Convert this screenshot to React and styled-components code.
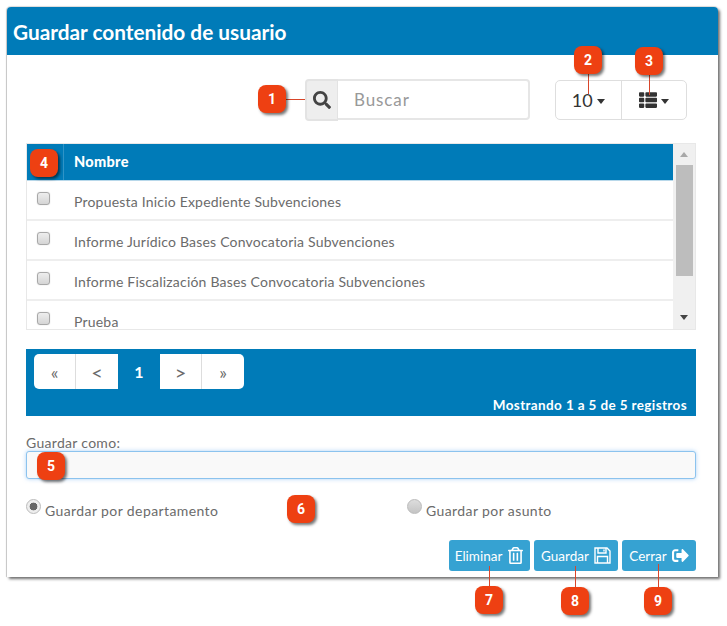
import React from "react";
import styled, { createGlobalStyle } from "styled-components";
import { FaSearch, FaThList, FaRegTrashAlt, FaSignOutAlt } from "react-icons/fa";

const BLUE = "#007bb8";
const TEXT = "#6b6b6b";

const GlobalStyle = createGlobalStyle`
  html, body {
    margin: 0;
    background: #fff;
  }
  body {
    font-family: "Lato", "Noto Sans", sans-serif;
    color: ${TEXT};
  }
`;

const Page = styled.div`
  position: relative;
  width: 727px;
  height: 626px;
  overflow: hidden;
  padding: 7px 0 0 7px;
  box-sizing: border-box;
`;

const Panel = styled.div`
  width: 711px;
  height: 570px;
  box-sizing: border-box;
  background: #fff;
  border-radius: 4px 4px 0 0;
  box-shadow: 2px 2px 3px #6e6e6e, -1px 0 1px #c8c8c8, 0 -1px 1px #e2e2e2;
  display: flex;
  flex-direction: column;
`;

const Header = styled.h1`
  margin: 0;
  height: 48px;
  flex: none;
  display: flex;
  align-items: center;
  padding-left: 6px;
  background: ${BLUE};
  border-radius: 4px 4px 0 0;
  color: #fff;
  font-size: 20.8px;
  font-weight: 700;
`;

const Body = styled.div`
  flex: 1;
  padding: 24px 22px 0 19px;
  display: flex;
  flex-direction: column;
`;

const Toolbar = styled.div`
  display: flex;
  justify-content: flex-end;
  align-items: center;
  height: 42px;
  padding-right: 9px;
  gap: 25px;
`;

const SearchGroup = styled.div`
  display: flex;
  width: 225px;
  height: 42px;
  box-sizing: border-box;
`;

const SearchAddon = styled.div`
  width: 33px;
  flex: none;
  box-sizing: border-box;
  display: flex;
  align-items: center;
  justify-content: center;
  background: #eee;
  border: 2px solid #e3e3e3;
  border-right-width: 1px;
  border-radius: 4px 0 0 4px;
  color: #444;
  font-size: 18px;
`;

const SearchInput = styled.div`
  flex: 1;
  height: 41px;
  box-sizing: border-box;
  display: flex;
  align-items: center;
  padding-left: 16px;
  border: 2px solid #e6e6e6;
  border-left: 0;
  border-radius: 0 4px 4px 0;
  color: #999;
  font-size: 17px;
  letter-spacing: 0.9px;
`;

const ButtonGroup = styled.div`
  display: flex;
  width: 132px;
  height: 40px;
  box-sizing: border-box;
  border: 1px solid #dedede;
  border-radius: 5px;
`;

const GroupButton = styled.div`
  flex: 1;
  display: flex;
  align-items: center;
  justify-content: center;
  gap: 4px;
  color: #333;
  font-size: 18px;
  & + & {
    border-left: 1px solid #dedede;
  }
`;

const Caret = styled.span`
  width: 0;
  height: 0;
  border-left: 4.5px solid transparent;
  border-right: 4.5px solid transparent;
  border-top: 5px solid #333;
  margin-top: 2px;
`;

const TableFrame = styled.div`
  margin-top: 22px;
  height: 187px;
  box-sizing: border-box;
  border: 1px solid #e8e8e8;
  display: grid;
  grid-template-columns: 1fr 22px;
`;

const TableClip = styled.div`
  overflow: hidden;
  min-width: 0;
`;

const TableHead = styled.div`
  height: 36px;
  background: ${BLUE};
  border-bottom: 1px solid #b8d8ea;
  display: grid;
  grid-template-columns: 36px 1fr;
  align-items: center;
  color: #fff;
  font-size: 14.5px;
  font-weight: 900;
  letter-spacing: 0.3px;
`;

const HeadCell = styled.div`
  height: 100%;
  box-sizing: border-box;
  display: flex;
  align-items: center;
  padding: 0 0 2px 10px;
  border-left: 1px solid #2f93c6;
`;

const Row = styled.div`
  height: 40px;
  box-sizing: border-box;
  display: grid;
  grid-template-columns: 47px 1fr;
  border-bottom: 2px solid #eeeeee;
  font-size: 14px;
  letter-spacing: 0.2px;
`;

const RowName = styled.div`
  padding-top: 12px;
  white-space: nowrap;
`;

const CheckBox = styled.span`
  display: block;
  width: 13px;
  height: 13px;
  margin: 11px 0 0 10px;
  box-sizing: border-box;
  background: linear-gradient(#eee, #d5d5d5);
  border: 1px solid #a8a8a8;
  border-radius: 3px;
  box-shadow: 0 0 1px #bbb;
`;

const Scrollbar = styled.div`
  background: #f0f0f0;
  display: flex;
  flex-direction: column;
  align-items: center;
  padding-top: 8px;
`;

const ScrollThumb = styled.div`
  width: 17px;
  height: 111px;
  margin-top: 8px;
  background: #bdbdbd;
`;

const ScrollArrow = styled.span`
  width: 0;
  height: 0;
  border-left: 4.5px solid transparent;
  border-right: 4.5px solid transparent;
  ${(p) => (p.$down ? "border-top: 5px solid #444; margin-top: 39px;" : "border-bottom: 5px solid #a8a8a8;")}
`;

const FooterBand = styled.div`
  margin-top: 19px;
  height: 67px;
  flex: none;
  box-sizing: border-box;
  padding: 5px 9px 0 8px;
  background: ${BLUE};
  display: flex;
  flex-direction: column;
`;

const Pagination = styled.div`
  display: flex;
  height: 35px;
`;

const PageItem = styled.div`
  width: 42px;
  display: flex;
  align-items: center;
  justify-content: center;
  box-sizing: border-box;
  font-size: ${(p) => p.$size || 16}px;
  color: ${(p) => (p.$active ? "#fff" : TEXT)};
  font-weight: ${(p) => (p.$active ? 700 : 400)};
  background: ${(p) => (p.$active ? "transparent" : "#fff")};
  border-right: ${(p) => (p.$active || p.$noBorder ? "0" : "1px solid #ddd")};
  &:first-child {
    border-radius: 5px 0 0 5px;
  }
  &:last-child {
    border-radius: 0 5px 5px 0;
  }
`;

const Summary = styled.div`
  margin-top: auto;
  padding-bottom: 3px;
  text-align: right;
  color: #fff;
  font-size: 13.5px;
  font-weight: 700;
  letter-spacing: 0.37px;
`;

const Label = styled.label`
  display: block;
  margin-top: 19px;
  height: 16px;
  line-height: 16px;
  font-size: 14px;
  letter-spacing: 0.3px;
`;

const NameInput = styled.div`
  height: 28px;
  box-sizing: border-box;
  background: #f9f9f9;
  border: 1px solid #8cc3ee;
  border-radius: 3px;
  box-shadow: 0 0 4px rgba(120, 180, 240, 0.6);
`;

const RadioRow = styled.div`
  display: grid;
  grid-template-columns: 381px 1fr;
  margin-top: 20px;
  height: 22px;
`;

const RadioOption = styled.div`
  display: flex;
  align-items: flex-start;
  gap: 4px;
  font-size: 14px;
  letter-spacing: 0.4px;
`;

const RadioMark = styled.span`
  width: 15px;
  height: 15px;
  flex: none;
  box-sizing: border-box;
  border-radius: 50%;
  border: 1px solid #bbb;
  background: ${(p) => (p.$checked ? "radial-gradient(circle, #666 0 3.6px, #eee 4.2px)" : "linear-gradient(#ddd, #c4c4c4)")};
`;

const RadioText = styled.span`
  padding-top: 3px;
`;

const Actions = styled.div`
  display: flex;
  justify-content: flex-end;
  gap: 4px;
  margin-top: 19px;
`;

const ActionButton = styled.div`
  width: ${(p) => p.$w}px;
  height: 31px;
  box-sizing: border-box;
  display: flex;
  align-items: center;
  justify-content: center;
  gap: 5px;
  background: #36a2d2;
  border-radius: 3px;
  color: #fff;
  font-size: 13.5px;
  svg {
    font-size: 17px;
  }
`;

/* numbered callouts sit on top of the screenshot */
const Badge = styled.div`
  position: absolute;
  left: ${(p) => p.$x}px;
  top: ${(p) => p.$y}px;
  width: 28px;
  height: 28px;
  display: flex;
  align-items: center;
  justify-content: center;
  background: #ee4012;
  border-radius: 8px;
  box-shadow: 2px 2px 3px rgba(0, 0, 0, 0.55);
  color: #fff;
  font-family: "Liberation Sans Narrow", "Roboto", sans-serif;
  font-size: 14px;
  font-weight: 700;
`;

const Line = styled.div`
  position: absolute;
  left: ${(p) => p.$x}px;
  top: ${(p) => p.$y}px;
  width: ${(p) => p.$w}px;
  height: ${(p) => p.$h}px;
  background: #d8462a;
`;

// floppy outline, the package one has a different inner shape
const SaveIcon = () => (
  <svg width="17" height="17" viewBox="0 0 17 17" fill="none" stroke="currentColor" strokeWidth="1.4">
    <path d="M1 1h12l3 3v12H1z" />
    <path d="M4 1v5h8V1M10 2.5v2" />
    <path d="M3.5 16v-6.5h10V16" />
  </svg>
);

const rows = [
  "Propuesta Inicio Expediente Subvenciones",
  "Informe Jurídico Bases Convocatoria Subvenciones",
  "Informe Fiscalización Bases Convocatoria Subvenciones",
  "Prueba",
];

const badges = [
  [1, 258, 85], [2, 574, 46], [3, 635, 47], [4, 30, 149], [5, 37, 452],
  [6, 287, 495], [7, 475, 586], [8, 561, 587], [9, 644, 587],
];

const lines = [
  [286, 99, 19, 1], [588, 74, 1, 20], [649, 75, 1, 20],
  [489, 566, 1, 20], [575, 566, 1, 21], [658, 564, 1, 23],
];

export default function App() {
  return (
    <Page>
      <GlobalStyle />
      <Panel>
        <Header>Guardar contenido de usuario</Header>
        <Body>
          <Toolbar>
            <SearchGroup>
              <SearchAddon><FaSearch /></SearchAddon>
              <SearchInput>Buscar</SearchInput>
            </SearchGroup>
            <ButtonGroup>
              <GroupButton>10 <Caret /></GroupButton>
              <GroupButton><FaThList /><Caret /></GroupButton>
            </ButtonGroup>
          </Toolbar>

          <TableFrame>
            <TableClip>
              <TableHead>
                <div />
                <HeadCell>Nombre</HeadCell>
              </TableHead>
              {rows.map((name) => (
                <Row key={name}>
                  <div><CheckBox /></div>
                  <RowName>{name}</RowName>
                </Row>
              ))}
            </TableClip>
            <Scrollbar>
              <ScrollArrow />
              <ScrollThumb />
              <ScrollArrow $down />
            </Scrollbar>
          </TableFrame>

          <FooterBand>
            <Pagination>
              <PageItem $size={18}>«</PageItem>
              <PageItem $size={20} $noBorder>&lt;</PageItem>
              <PageItem $active>1</PageItem>
              <PageItem $size={20}>&gt;</PageItem>
              <PageItem $size={18} $noBorder>»</PageItem>
            </Pagination>
            <Summary>Mostrando 1 a 5 de 5 registros</Summary>
          </FooterBand>

          <Label>Guardar como:</Label>
          <NameInput />

          <RadioRow>
            <RadioOption>
              <RadioMark $checked />
              <RadioText>Guardar por departamento</RadioText>
            </RadioOption>
            <RadioOption>
              <RadioMark />
              <RadioText>Guardar por asunto</RadioText>
            </RadioOption>
          </RadioRow>

          <Actions>
            <ActionButton $w={81}>Eliminar <FaRegTrashAlt /></ActionButton>
            <ActionButton $w={84}>Guardar <SaveIcon /></ActionButton>
            <ActionButton $w={74}>Cerrar <FaSignOutAlt /></ActionButton>
          </Actions>
        </Body>
      </Panel>

      {lines.map(([x, y, w, h]) => (
        <Line key={`${x}-${y}`} $x={x} $y={y} $w={w} $h={h} />
      ))}
      {badges.map(([n, x, y]) => (
        <Badge key={n} $x={x} $y={y}>{n}</Badge>
      ))}
    </Page>
  );
}
